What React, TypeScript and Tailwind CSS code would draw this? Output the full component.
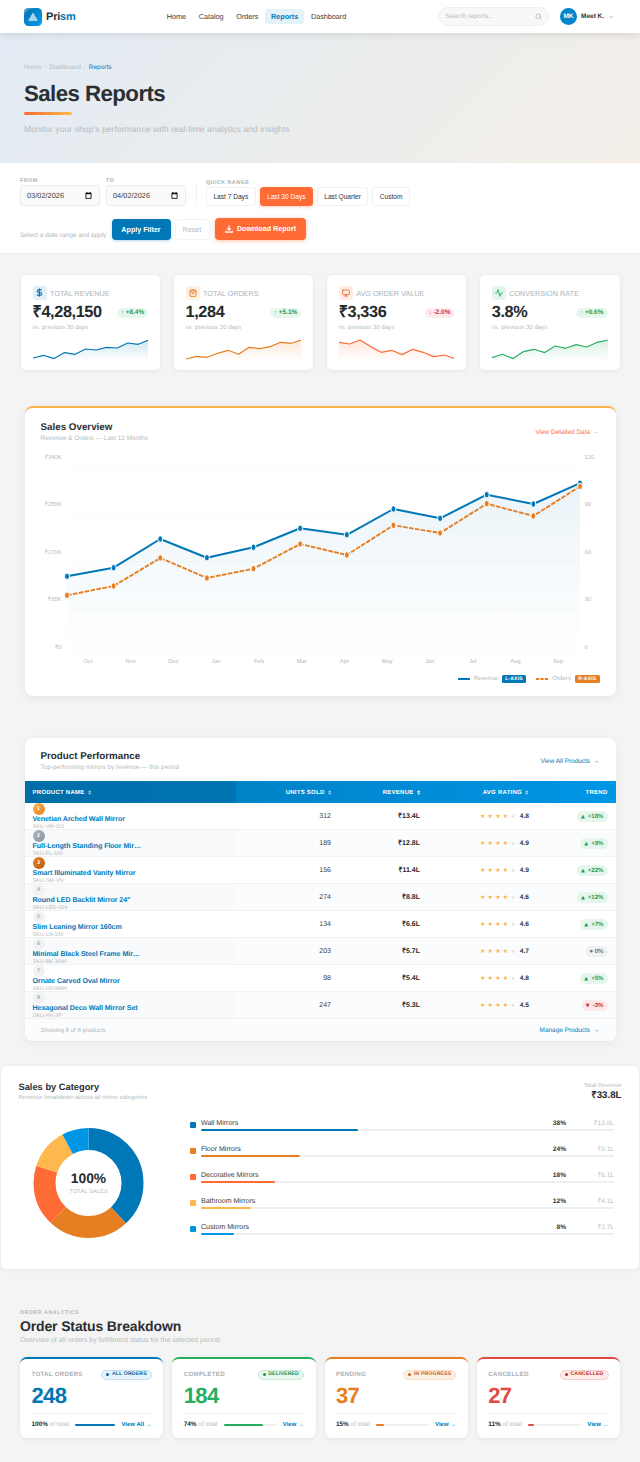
import type { ReactNode } from "react";
import { Activity, ChevronDown, DollarSign, Monitor, Search, ShoppingBag } from "lucide-react";
import clsx from "clsx";

const NAV_ITEMS = ["Home", "Catalog", "Orders", "Reports", "Dashboard"];

const MONTHS = ["Oct", "Nov", "Dec", "Jan", "Feb", "Mar", "Apr", "May", "Jun", "Jul", "Aug", "Sep"];

/** チャート描画領域（513 x 188）内の y 座標 */
const REVENUE_POINTS = [109.3, 100.7, 72, 90.7, 80.3, 61.3, 67.8, 42, 51.3, 27.7, 37, 16.2];
const ORDER_POINTS = [128.3, 119, 91, 111, 101.7, 77, 88, 58.3, 66, 36.7, 49, 19.4];

type Kpi = {
  label: string;
  value: string;
  arrow: string;
  delta: string;
  color: string;
  iconClass: string;
  icon: ReactNode;
  points: number[];
};

const KPIS: Kpi[] = [
  {
    label: "TOTAL REVENUE",
    value: "₹4,28,150",
    arrow: "↑",
    delta: "+8.4%",
    color: "#0077b6",
    iconClass: "bg-[#e2f0f8] text-[#0077b6]",
    icon: <DollarSign size={9} strokeWidth={2.8} />,
    points: [20, 17.3, 20.6, 14.6, 16.3, 11, 12, 9.3, 10, 5, 6.3, 2],
  },
  {
    label: "TOTAL ORDERS",
    value: "1,284",
    arrow: "↑",
    delta: "+5.1%",
    color: "#e67e22",
    iconClass: "bg-[#fdf0e3] text-[#e67e22]",
    icon: <ShoppingBag size={8} strokeWidth={2.8} />,
    points: [21, 18.3, 19.3, 15.3, 12.3, 16.3, 9.3, 10.6, 8.6, 4.3, 5.3, 2],
  },
  {
    label: "AVG ORDER VALUE",
    value: "₹3,336",
    arrow: "↓",
    delta: "-2.0%",
    color: "#ff6b35",
    iconClass: "bg-[#ffede6] text-[#ff6b35]",
    icon: <Monitor size={8} strokeWidth={2.8} />,
    points: [4.3, 6, 2, 8.6, 14.3, 12.3, 16.6, 11.3, 14.3, 18.6, 17, 20.6],
  },
  {
    label: "CONVERSION RATE",
    value: "3.8%",
    arrow: "↑",
    delta: "+0.6%",
    color: "#27ae60",
    iconClass: "bg-[#e4f6ec] text-[#27ae60]",
    icon: <Activity size={8} strokeWidth={2.8} />,
    points: [19.6, 16.3, 20.6, 13.6, 11.3, 14.6, 8, 10.3, 6.6, 9, 4.3, 2],
  },
];

const PRODUCTS = [
  { name: "Venetian Arched Wall Mirror", sku: "SKU-VM-001", units: 312, revenue: "₹13.4L", rating: "4.8", trend: 18 },
  { name: "Full-Length Standing Floor Mir…", sku: "SKU-FL-160", units: 189, revenue: "₹12.8L", rating: "4.9", trend: 9 },
  { name: "Smart Illuminated Vanity Mirror", sku: "SKU-SM-VN", units: 156, revenue: "₹11.4L", rating: "4.9", trend: 22 },
  { name: 'Round LED Backlit Mirror 24"', sku: "SKU-LED-024", units: 274, revenue: "₹8.8L", rating: "4.6", trend: 12 },
  { name: "Slim Leaning Mirror 160cm", sku: "SKU-LN-160", units: 134, revenue: "₹6.6L", rating: "4.6", trend: 7 },
  { name: "Minimal Black Steel Frame Mir…", sku: "SKU-BK-3040", units: 203, revenue: "₹5.7L", rating: "4.7", trend: 0 },
  { name: "Ornate Carved Oval Mirror", sku: "SKU-OV-MAH", units: 98, revenue: "₹5.4L", rating: "4.8", trend: 5 },
  { name: "Hexagonal Deco Wall Mirror Set", sku: "SKU-HX-3P", units: 247, revenue: "₹5.3L", rating: "4.5", trend: -3 },
];

const RANK_CLASSES = [
  "bg-gradient-to-br from-[#ffb347] to-[#e67e22] text-white",
  "bg-gradient-to-br from-[#aab4bc] to-[#8b979f] text-white",
  "bg-gradient-to-br from-[#e67e22] to-[#b85f1a] text-white",
];

const CATEGORIES = [
  { name: "Wall Mirrors", share: 38, amount: "₹12.8L", color: "#0077b6" },
  { name: "Floor Mirrors", share: 24, amount: "₹8.1L", color: "#e67e22" },
  { name: "Decorative Mirrors", share: 18, amount: "₹6.1L", color: "#ff6b35" },
  { name: "Bathroom Mirrors", share: 12, amount: "₹4.1L", color: "#ffb84d" },
  { name: "Custom Mirrors", share: 8, amount: "₹2.7L", color: "#0096e6" },
];

const STATUSES = [
  {
    label: "TOTAL ORDERS",
    badge: "ALL ORDERS",
    count: 248,
    share: 100,
    link: "View All →",
    border: "border-t-[#0077b6]",
    text: "text-[#0077b6]",
    bar: "bg-[#0077b6]",
    badgeClass: "border-[#c5e0ef] bg-[#e6f3fa] text-[#0068a3]",
  },
  {
    label: "COMPLETED",
    badge: "DELIVERED",
    count: 184,
    share: 74,
    link: "View →",
    border: "border-t-[#27ae60]",
    text: "text-[#27ae60]",
    bar: "bg-[#27ae60]",
    badgeClass: "border-[#c9ebd7] bg-[#e9f8ef] text-[#1a8f4c]",
  },
  {
    label: "PENDING",
    badge: "IN PROGRESS",
    count: 37,
    share: 15,
    link: "View →",
    border: "border-t-[#e67e22]",
    text: "text-[#e67e22]",
    bar: "bg-[#e67e22]",
    badgeClass: "border-[#fadcc2] bg-[#fdf1e6] text-[#c4601a]",
  },
  {
    label: "CANCELLED",
    badge: "CANCELLED",
    count: 27,
    share: 11,
    link: "View →",
    border: "border-t-[#e04a3f]",
    text: "text-[#e04a3f]",
    bar: "bg-[#e04a3f]",
    badgeClass: "border-[#f7cfcb] bg-[#fdecea] text-[#c0292b]",
  },
];

function toPath(points: number[], width: number) {
  const step = width / (points.length - 1);
  return points.map((y, i) => `${i ? "L" : "M"}${(i * step).toFixed(2)} ${y}`).join(" ");
}

function Header() {
  return (
    <header className="relative z-10 flex h-[33px] items-center bg-white pl-6 shadow-[0_1px_8px_rgba(0,0,0,0.12)]">
      <div className="flex w-[137px] items-center gap-1">
        <svg width="18" height="18" viewBox="0 0 18 18">
          <defs>
            <linearGradient id="logo" x1="0" y1="0" x2="1" y2="1">
              <stop offset="0" stopColor="#0071ae" />
              <stop offset="1" stopColor="#0a9cec" />
            </linearGradient>
          </defs>
          <rect width="18" height="18" rx="4.5" fill="url(#logo)" />
          <path d="M0 8C2 3 6 1 10 0H4.500A4.500 4.500 0 0 0 0 4.500Z" fill="#fff" opacity=".22" />
          <path d="M9 5L13.300 12.600H4.700Z" fill="#fff" fillOpacity=".65" stroke="#fff" strokeOpacity=".75" strokeWidth=".6" strokeLinejoin="round" />
        </svg>
        <span className="pt-px text-[11px] leading-none font-bold tracking-[-0.2px] text-[#2b2f33]">
          Pri<span className="text-[#0077b6]">sm</span>
        </span>
      </div>
      <nav className="flex w-[277px] items-center gap-[1.200px] text-[7.3px] leading-none tracking-[-0.06px]">
        {NAV_ITEMS.map((item) => (
          <a
            key={item}
            className={clsx(
              "flex h-[15px] items-center rounded-[3.5px] px-[5.8px] pt-px",
              item === "Reports" ? "bg-[#e4f2f9] font-bold text-[#0077b6]" : "text-[#3c4043]",
            )}
          >
            {item}
          </a>
        ))}
      </nav>
      <div className="flex h-[19px] w-[111px] items-center justify-between rounded-full border border-[#eeefef] bg-[#f8f8f8] pr-1.5 pl-[6.500px] text-[6.5px] leading-none text-[#b6bbbf]">
        <span className="pt-[2px]">Search reports...</span>
        <Search size={7} className="text-[#9ba2a7]" />
      </div>
      <div className="ml-[11px] flex items-center">
        <span className="flex size-[17px] items-center justify-center rounded-full bg-[#0086cc] pt-px text-[6.5px] leading-none font-bold text-white">
          MK
        </span>
        <span className="ml-1 pt-[2px] text-[6.5px] leading-none font-bold text-[#2b2f33]">Meet K.</span>
        <ChevronDown size={6} strokeWidth={3} className="ml-1 text-[#a3a9ad]" />
      </div>
    </header>
  );
}

function Hero() {
  return (
    <section className="flex h-[130px] flex-col items-start bg-[linear-gradient(135deg,#e2ebf4_0%,#ebeded_50%,#f4eee8_100%)] px-6 pt-8">
      <div className="flex gap-[3px] text-[6.5px] leading-none text-[#b5bcc1]">
        <span>Home</span>
        <span className="text-[#d8dcdf]">/</span>
        <span>Dashboard</span>
        <span className="text-[#d8dcdf]">/</span>
        <span className="text-[#0077b6]">Reports</span>
      </div>
      <h1 className="mt-[11.500px] text-[22.3px] leading-none font-bold tracking-[-0.026em] text-[#2b2f33]">Sales Reports</h1>
      <div className="mt-[7px] h-[2.500px] w-12 rounded-full bg-gradient-to-r from-[#ff6b35] to-[#ffb84d]" />
      <p className="mt-[10px] text-[8.6px] leading-none tracking-[0.04px] text-[#b5bbc0]">
        Monitor your shop's performance with real-time analytics and insights
      </p>
    </section>
  );
}

function DateField({ label, value }: { label: string; value: string }) {
  return (
    <div className="flex w-20 flex-col">
      <span className="text-[5.3px] leading-none font-bold tracking-[0.5px] text-[#a9b1b6]">{label}</span>
      <div className="mt-px flex h-[21px] items-center justify-between rounded-[3px] border border-[#eceded] bg-[#fafafa] pr-[7px] pl-1.5 text-[7.4px] leading-none text-[#3a3d40]">
        {value}
        <svg width="7" height="7" viewBox="0 0 7 7">
          <path d="M.9 1.200H6.100V6.400H.9Z" fill="none" stroke="#111" strokeWidth=".9" />
          <path d="M.9 1.600H6.100M1.900 0V1.500M5.100 0V1.500" stroke="#111" strokeWidth="1.100" />
        </svg>
      </div>
    </div>
  );
}

function FilterBar() {
  return (
    <section className="h-[91px] border-b border-[#ededed] bg-white px-5 pt-3.5">
      <div className="flex h-[29px] items-end gap-1.5">
        <DateField label="FROM" value="03/02/2026" />
        <DateField label="TO" value="04/02/2026" />
        <div className="ml-[4px] h-[22px] w-px bg-[#f2f2f2]" />
        <div className="ml-[3px] flex flex-col">
          <span className="text-[5.3px] leading-none font-bold tracking-[0.5px] text-[#a9b1b6]">QUICK RANGE</span>
          <div className="mt-px flex gap-1 text-[6.6px] leading-none">
            {["Last 7 Days", "Last 30 Days", "Last Quarter", "Custom"].map((range) => (
              <button
                key={range}
                className={clsx(
                  "h-[19px] rounded-[3px] border px-[6.400px] pt-px",
                  range === "Last 30 Days"
                    ? "border-[#ff6b35] bg-[#ff6b35] text-white shadow-[0_1px_3px_rgba(255,107,53,0.35)]"
                    : "border-[#f1f1f1] bg-white text-[#2f3336]",
                )}
              >
                {range}
              </button>
            ))}
          </div>
        </div>
      </div>
      <div className="mt-3 flex h-[22px] items-end leading-none">
        <span className="mb-px w-[91.500px] text-[6.5px] text-[#b0b7bb]">Select a date range and apply</span>
        <button className="h-[21px] w-[59px] rounded-[4px] bg-[#0077b6] pt-[2px] text-[7.15px] font-bold text-white shadow-[0_1px_3px_rgba(0,119,182,0.3)]">
          Apply Filter
        </button>
        <button className="ml-1 h-[21px] w-[35px] rounded-[4px] border border-[#f3f3f3] text-[7px] text-[#b3babe]">Reset</button>
        <button className="ml-[5.500px] flex h-[22px] w-[91px] items-center justify-center gap-1 rounded-[4px] bg-[#ff6b35] text-[7.15px] font-bold text-white shadow-[0_1px_4px_rgba(255,107,53,0.4)]">
          <svg className="mb-px" width="8" height="8" viewBox="0 0 8 8" fill="none" stroke="currentColor" strokeWidth="1.200">
            <path d="M4 .5V5M2.200 3.400L4 5.200L5.800 3.400M.8 5.800V7.200H7.200V5.800" />
          </svg>
          <span className="pt-[2px]">Download Report</span>
        </button>
      </div>
    </section>
  );
}

function KpiCard({ kpi, index }: { kpi: Kpi; index: number }) {
  const line = toPath(kpi.points, 116);

  return (
    <article className="h-[94.500px] rounded-[5px] bg-white px-[12px] pt-[10.500px] shadow-[0_1px_4px_rgba(0,0,0,0.07)]">
      <div className="flex items-center gap-[3.500px]">
        <span className={clsx("flex size-[14px] items-center justify-center rounded-[3px]", kpi.iconClass)}>{kpi.icon}</span>
        <span className="pt-[2px] text-[7.2px] leading-none tracking-[0.04px] whitespace-nowrap text-[#a9b3ba]">{kpi.label}</span>
      </div>
      <div className="mt-[4.500px] flex h-4 items-center justify-between">
        <span className="pt-px text-[16.3px] leading-none font-bold tracking-[-0.024em] text-[#26292c]">{kpi.value}</span>
        <span
          className={clsx(
            "mt-[2px] flex h-[10.500px] items-center gap-[2px] rounded-full px-1 pt-px text-[6.5px] leading-none font-bold",
            kpi.arrow === "↑" ? "bg-[#e6f7ee] text-[#1f9d55]" : "bg-[#fdeaea] text-[#d63031]",
          )}
        >
          <span className="text-[5px]">{kpi.arrow}</span>
          {kpi.delta}
        </span>
      </div>
      <p className="mt-[5px] text-[6.1px] leading-none text-[#b5bcc0]">vs. previous 30 days</p>
      <svg className="mt-[6.500px] block w-full" height="23" viewBox="0 0 116 23" preserveAspectRatio="none">
        <defs>
          <linearGradient id={`spark-${index}`} x1="0" y1="0" x2="0" y2="1">
            <stop offset="0" stopColor={kpi.color} stopOpacity=".18" />
            <stop offset="1" stopColor={kpi.color} stopOpacity="0" />
          </linearGradient>
        </defs>
        <path d={`${line} L116 23 L0 23Z`} fill={`url(#spark-${index})`} />
        <path d={line} fill="none" stroke={kpi.color} strokeWidth="1.200" strokeLinejoin="round" />
      </svg>
    </article>
  );
}

function SectionHeading({ title, description, link, linkClass }: { title: string; description: string; link: string; linkClass: string }) {
  return (
    <div className="flex items-center justify-between px-4">
      <div>
        <h2 className="text-[9.8px] leading-none font-bold text-[#2b2f33]">{title}</h2>
        <p className="mt-[3.500px] text-[6.45px] leading-none text-[#b5bcc0]">{description}</p>
      </div>
      <a className={clsx("flex gap-[3px] pt-px text-[6.45px] leading-none", linkClass)}>
        {link}
        <span>→</span>
      </a>
    </div>
  );
}

function SeriesDots({ points, color }: { points: number[]; color: string }) {
  return points.map((y, i) => (
    <ellipse key={i} cx={(i * 513) / 11} cy={y} rx="2.500" ry="3.200" fill={color} stroke="#fff" strokeWidth="1" />
  ));
}

function SalesOverview() {
  const revenue = toPath(REVENUE_POINTS, 513);
  const orders = toPath(ORDER_POINTS, 513);

  return (
    <section className="mx-[24.500px] mt-[36.500px] h-[290px] rounded-[8px] border-t-2 border-[#f7b24a] bg-white pt-[15px] shadow-[0_2px_10px_rgba(0,0,0,0.07)]">
      <SectionHeading
        title="Sales Overview"
        description="Revenue & Orders — Last 12 Months"
        link="View Detailed Data"
        linkClass="text-[#ff6b35]"
      />
      <div className="mt-[13px] flex h-[196px] text-[5.8px] leading-none text-[#b3babe]">
        <div className="flex w-[37px] flex-col justify-between text-right">
          {["₹340K", "₹255K", "₹170K", "₹85K", "₹0"].map((tick) => (
            <span key={tick}>{tick}</span>
          ))}
        </div>
        <svg className="mt-[11.500px] ml-[5px] overflow-visible" width="513" height="188" viewBox="0 0 513 188">
          <defs>
            <linearGradient id="revenue-area" x1="0" y1="0" x2="0" y2="1">
              <stop offset="0" stopColor="#0077b6" stopOpacity=".08" />
              <stop offset=".86" stopColor="#0077b6" stopOpacity=".01" />
              <stop offset="1" stopColor="#0077b6" stopOpacity="0" />
            </linearGradient>
          </defs>
          {[0.5, 47.5, 94.5, 141.5, 187.5].map((y) => (
            <path key={y} d={`M0 ${y}H513`} stroke="#fafafa" />
          ))}
          <path d={`${revenue} L513 188 L0 188Z`} fill="url(#revenue-area)" />
          <path d={revenue} fill="none" stroke="#0077b6" strokeWidth="2" strokeLinejoin="round" />
          <path d={orders} fill="none" stroke="#e67e22" strokeWidth="1.900" strokeDasharray="4.700 1.300" strokeLinejoin="round" />
          <SeriesDots points={REVENUE_POINTS} color="#0077b6" />
          <SeriesDots points={ORDER_POINTS} color="#e67e22" />
        </svg>
        <div className="ml-[5px] flex flex-col justify-between">
          {[120, 90, 60, 30, 0].map((tick) => (
            <span key={tick}>{tick}</span>
          ))}
        </div>
      </div>
      <div className="mt-[8px] ml-[42px] flex w-[513px] text-[5.8px] leading-none text-[#b0b7bb]">
        {MONTHS.map((month) => (
          <span key={month} className="flex-1 text-center">
            {month}
          </span>
        ))}
      </div>
      <div className="mt-[9px] flex items-center justify-end pr-4 text-[6.15px] leading-none text-[#b5bcc0]">
        <svg width="12" height="2">
          <path d="M0 1H12" stroke="#0077b6" strokeWidth="2" />
        </svg>
        <span className="ml-1 pt-px">Revenue</span>
        <span className="ml-1 flex h-[8px] w-[23.500px] items-center justify-center rounded-[1.500px] bg-[#0077b6] pt-px text-[5px] font-bold tracking-[0.2px] text-white">
          L-AXIS
        </span>
        <svg className="ml-[10.500px]" width="12" height="2">
          <path d="M0 1H12" stroke="#e67e22" strokeWidth="2" strokeDasharray="3.200 1.200" />
        </svg>
        <span className="ml-1 pt-px">Orders</span>
        <span className="ml-1 flex h-[8px] w-[24.500px] items-center justify-center rounded-[1.500px] bg-[#e67e22] pt-px text-[5px] font-bold tracking-[0.2px] text-white">
          R-AXIS
        </span>
      </div>
    </section>
  );
}

function SortIcon({ active = false }: { active?: boolean }) {
  return (
    <svg className="ml-[3px]" width="3.500" height="5" viewBox="0 0 3.500 5" opacity={active ? 1 : 0.65}>
      <path d="M0 2.200L1.750 .2L3.500 2.200Z" fill="#fff" />
      <path d="M0 2.800L1.750 4.800L3.500 2.800Z" fill={active ? "#ffe0b0" : "#fff"} />
    </svg>
  );
}

function TrendBadge({ value }: { value: number }) {
  const glyph = value > 0 ? "▲" : value < 0 ? "▼" : "●";
  return (
    <span
      className={clsx(
        "inline-flex h-[10.500px] items-center rounded-full px-1 pt-px text-[6.1px] leading-none font-bold",
        value > 0 && "gap-[3px] bg-[#e6f6ed] text-[#1f9d55]",
        value < 0 && "gap-[3px] bg-[#fde9e9] text-[#c9302c]",
        value === 0 && "gap-[2px] bg-[#eef0f1] text-[#70777c]",
      )}
    >
      <span className={clsx("font-['DejaVu_Sans']", value === 0 ? "text-[3.5px]" : "pt-px text-[5px]")}>{glyph}</span>
      <span className="pt-px">{value > 0 ? `+${value}` : value}%</span>
    </span>
  );
}

const TABLE_COLUMNS = "grid grid-cols-[211.500px_103px_89px_108.500px_79px]";

const TABLE_HEADINGS = [
  { label: "PRODUCT NAME", sortable: true },
  { label: "UNITS SOLD", sortable: true },
  { label: "REVENUE", sortable: true },
  { label: "AVG RATING", sortable: true },
  { label: "TREND", sortable: false },
];

function ProductTable() {
  return (
    <section className="mx-[24.500px] mt-[41.500px] h-[303.500px] overflow-hidden rounded-[8px] bg-white pt-[14px] shadow-[0_2px_10px_rgba(0,0,0,0.06)]">
      <SectionHeading
        title="Product Performance"
        description="Top-performing mirrors by revenue — this period"
        link="View All Products"
        linkClass="text-[#0077b6]"
      />
      <div
        className={clsx(
          TABLE_COLUMNS,
          "mt-[10px] h-[22px] bg-gradient-to-r from-[#0077b6] to-[#0096e6] text-[6px] leading-none font-bold tracking-[0.25px] text-white",
        )}
      >
        {TABLE_HEADINGS.map(({ label, sortable }, i) => (
          <div key={label} className={clsx("flex h-[22px] items-center", i === 0 ? "bg-[#005a8c]/35 pl-2" : "justify-end pr-2")}>
            <span className="pt-[2px]">{label}</span>
            {sortable ? <SortIcon active={label === "REVENUE"} /> : null}
          </div>
        ))}
      </div>
      {PRODUCTS.map((product, i) => (
        <div
          key={product.sku}
          className={clsx(
            TABLE_COLUMNS,
            "h-[27px] items-center overflow-hidden border-b border-[#eff1f2] text-right text-[7px] leading-none text-[#3a3e41]",
            i % 2 === 1 ? "bg-[#fafcfe]" : "bg-white",
          )}
        >
          <div className={clsx("h-[26px] pl-2 text-left", i % 2 === 1 && "bg-[#f8fafb]")}>
            <span
              className={clsx(
                "flex size-[12px] items-center justify-center rounded-full pt-px text-[5.5px] font-bold",
                RANK_CLASSES[i] ?? "bg-[#f0f2f3] text-[#a9b1b6]",
              )}
            >
              {i + 1}
            </span>
            <p className="mt-px text-[7.1px] leading-none font-bold tracking-[-0.06px] whitespace-nowrap text-[#0077b6]">{product.name}</p>
            <p className="mt-[2px] text-[5.5px] leading-none text-[#b5bcc0]">{product.sku}</p>
          </div>
          <div className="pt-px pr-2">{product.units}</div>
          <div className="pt-px pr-2 font-bold text-[#26292c]">{product.revenue}</div>
          <div className="flex items-center justify-end pt-px pr-[7.500px]">
            {[0, 1, 2, 3, 4].map((star) => (
              <span
                key={star}
                className={clsx(
                  "w-[7.600px] pt-px text-center font-['DejaVu_Sans']",
                  star < 4 ? "text-[6px] text-[#ffb347]" : "text-[5px] text-[#dde1e4]",
                )}
              >
                ★
              </span>
            ))}
            <span className="ml-[3px] pt-px text-[6.6px] font-bold text-[#2f3336]">{product.rating}</span>
          </div>
          <div className="flex justify-end pr-2">
            <TrendBadge value={product.trend} />
          </div>
        </div>
      ))}
      <div className="flex h-[22px] items-center justify-between bg-[#fafcfe] px-4 pt-px leading-none">
        <span className="text-[6.1px] text-[#b0b7bb]">Showing 8 of 8 products</span>
        <a className="flex gap-[3px] text-[6.45px] text-[#0077b6]">
          Manage Products <span>→</span>
        </a>
      </div>
    </section>
  );
}

function Donut() {
  const radius = 44;
  const circumference = 2 * Math.PI * radius;
  let offset = 0;

  return (
    <svg width="111" height="110" viewBox="0 0 111 110">
      <g transform="rotate(-90 55.5 55)">
        {CATEGORIES.map(({ name, share, color }) => {
          const start = offset;
          offset += share;
          return (
            <circle
              key={name}
              cx="55.500"
              cy="55"
              r={radius}
              fill="none"
              stroke={color}
              strokeWidth="22"
              strokeDasharray={`${(share / 100) * circumference} ${circumference}`}
              strokeDashoffset={(-start / 100) * circumference}
            />
          );
        })}
      </g>
      <text x="55.500" y="55" textAnchor="middle" fontSize="13.800" fontWeight="700" fill="#26292c">
        100%
      </text>
      <text x="55.600" y="65" textAnchor="middle" fontSize="5.400" letterSpacing=".25" fill="#b0b7bb">
        TOTAL SALES
      </text>
    </svg>
  );
}

function SalesByCategory() {
  return (
    <section className="mx-px mt-[25px] h-[203px] rounded-[5px] bg-white px-[17.500px] pt-[15px] leading-none shadow-[0_1px_5px_rgba(0,0,0,0.06)]">
      <div className="flex h-[22px] items-start justify-between">
        <div>
          <h2 className="mt-[2px] text-[9.3px] font-bold text-[#2b2f33]">Sales by Category</h2>
          <p className="mt-[3px] text-[6px] text-[#b5bcc0]">Revenue breakdown across all mirror categories</p>
        </div>
        <div className="text-right">
          <p className="mt-[2.500px] text-[5.9px] text-[#b5bcc0]">Total Revenue</p>
          <p className="mt-[1.500px] text-[9.7px] font-bold text-[#26292c]">₹33.8L</p>
        </div>
      </div>
      <div className="flex">
        <div className="mt-[25px] ml-[14.500px] w-[157px]">
          <Donut />
        </div>
        <ul className="mt-[17px] w-[424px]">
          {CATEGORIES.map(({ name, share, amount, color }) => (
            <li key={name} className="flex h-[26px] items-start">
              <span className="mt-[2px] mr-[5px] size-[6px] rounded-[1px]" style={{ backgroundColor: color }} />
              <div className="flex-1">
                <div className="flex h-[8px] items-center">
                  <span className="flex-1 text-[7.1px] tracking-[-0.03px] text-[#3a3e41]">{name}</span>
                  <span className="pt-px text-[6.6px] font-bold text-[#2f3336]">{share}%</span>
                  <span className="w-12 pt-px text-right text-[6.6px] text-[#b9c0c4]">{amount}</span>
                </div>
                <div className="mt-[1px] h-[2px] rounded-full bg-[#eeeff0]">
                  <div className="h-full rounded-full" style={{ width: `${share}%`, backgroundColor: color }} />
                </div>
              </div>
            </li>
          ))}
        </ul>
      </div>
    </section>
  );
}

function OrderStatus() {
  return (
    <section className="mt-[41.500px] px-5 leading-none">
      <p className="text-[5.3px] font-bold tracking-[0.6px] text-[#b0b6ba]">ORDER ANALYTICS</p>
      <h2 className="mt-[3px] text-[14px] font-bold tracking-[-0.01em] text-[#2b2f33]">Order Status Breakdown</h2>
      <p className="mt-[5px] text-[6.97px] text-[#b5bcc0]">Overview of all orders by fulfillment status for the selected period.</p>
      <div className="mt-[11.800px] grid grid-cols-4 gap-[9px]">
        {STATUSES.map((status) => (
          <article
            key={status.label}
            className={clsx(
              "h-[81px] rounded-[7px] border-t-2 bg-white px-[11.500px] pt-[11px] shadow-[0_1px_5px_rgba(0,0,0,0.07)]",
              status.border,
            )}
          >
            <div className="flex items-start justify-between">
              <span className="mt-[2px] text-[6.2px] font-bold tracking-[0.25px] text-[#aab1b6]">{status.label}</span>
              <span
                className={clsx(
                  "flex h-[10px] items-center gap-[2.500px] rounded-full border px-1 text-[5.2px] font-bold tracking-[0.12px] whitespace-nowrap",
                  status.badgeClass,
                )}
              >
                <span className="size-[3px] rounded-full bg-current" />
                <span className="pt-px">{status.badge}</span>
              </span>
            </div>
            <p className={clsx("mt-[5.400px] text-[22px] font-bold tracking-[-0.03em]", status.text)}>{status.count}</p>
            <div className="mt-[6.100px] flex items-center border-t border-[#f0f1f1] pt-[7px] text-[6.4px]">
              <span className="pt-px whitespace-nowrap text-[#b5bcc0]">
                <b className="text-[#2b2f33]">{status.share}%</b> of total
              </span>
              <div className="mx-1.5 h-[2.500px] flex-1 rounded-full bg-[#f0f1f1]">
                <div className={clsx("h-full rounded-full", status.bar)} style={{ width: `${status.share}%` }} />
              </div>
              <a className="pt-px text-[6px] font-bold whitespace-nowrap text-[#0077b6]">{status.link}</a>
            </div>
          </article>
        ))}
      </div>
    </section>
  );
}

export default function App() {
  return (
    <div className="h-[1462px] w-[640px] overflow-hidden bg-[#f4f4f4] font-['Liberation_Sans',Arial,sans-serif] [text-rendering:geometricPrecision]">
      <Header />
      <Hero />
      <FilterBar />
      <section className="grid grid-cols-4 gap-[13.300px] px-[20.500px] pt-[21px]">
        {KPIS.map((kpi, i) => (
          <KpiCard key={kpi.label} kpi={kpi} index={i} />
        ))}
      </section>
      <SalesOverview />
      <ProductTable />
      <SalesByCategory />
      <OrderStatus />
    </div>
  );
}
